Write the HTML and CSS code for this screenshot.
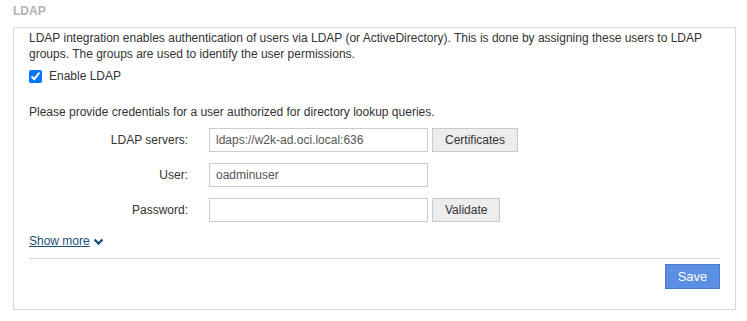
FILE: index.html
```html
<!DOCTYPE html>
<html lang="en">
<head>
    <meta charset="UTF-8" />
    <title>LDAP</title>
    <link rel="stylesheet" href="styles.css">
</head>
<body>
<div class="section">
    <div class="section-title">LDAP</div>
    <div class="panel">
        <p class="intro">LDAP integration enables authentication of users via LDAP (or ActiveDirectory). This is done by assigning these users to LDAP groups. The groups are used to identify the user permissions.</p>
        <label class="check">
            <input type="checkbox" checked />
            <span>Enable LDAP</span>
        </label>
        <p class="hint">Please provide credentials for a user authorized for directory lookup queries.</p>

        <div class="form-row">
            <label class="row-label" for="servers">LDAP servers:</label>
            <input class="field" type="text" id="servers" value="ldaps://w2k-ad.oci.local:636" />
            <button class="btn" type="button">Certificates</button>
        </div>
        <div class="form-row">
            <label class="row-label" for="user">User:</label>
            <input class="field" type="text" id="user" value="oadminuser" />
        </div>
        <div class="form-row">
            <label class="row-label" for="password">Password:</label>
            <input class="field" type="password" id="password" />
            <button class="btn" type="button">Validate</button>
        </div>

        <a class="show-more" href="#">Show more</a><svg class="chevron" width="11" height="8" viewBox="0 0 11 8"><path d="M1.5 1.5 L5.5 5.5 L9.5 1.5" fill="none" stroke="#1b4e78" stroke-width="2.4"/></svg>

        <div class="actions">
            <button class="btn-save" type="button">Save</button>
        </div>
    </div>
</div>
</body>
</html>
```

FILE: styles.css
```css
* {
    box-sizing: border-box;
}

body {
    margin: 0;
    font-family: "Liberation Sans", Arial, sans-serif;
    font-size: 12px;
    color: #333;
    background: #fff;
}

.section {
    padding: 4px 11px 0 13px;
}

.section-title {
    color: #b3b3b3;
    font-size: 12px;
    font-weight: bold;
    line-height: 15px;
    margin-bottom: 8px;
}

.panel {
    border: 1px solid #d9d9d9;
    padding: 2px 15px 20px 15px;
}

.intro {
    margin: 0;
    line-height: 16px;
}

.check {
    display: flex;
    align-items: center;
    height: 16px;
    margin-top: 6px;
}

.check input {
    margin: 0 7px 0 0;
    width: 13px;
    height: 13px;
}

.hint {
    margin: 20px 0 0;
    line-height: 16px;
}

.form-row {
    display: flex;
    align-items: center;
    margin-top: 11px;
}

.form-row:first-of-type {
    margin-top: 8px;
}

.row-label {
    width: 180px;
    padding-right: 21px;
    text-align: right;
    color: #333;
}

.field {
    width: 219px;
    height: 24px;
    border: 1px solid #ccc;
    padding: 0 6px;
    font: inherit;
    color: #555;
    outline: none;
}

.btn {
    height: 24px;
    margin-left: 4px;
    padding: 0 12px;
    border: 1px solid #c9c9c9;
    background: #ededed;
    color: #333;
    font: inherit;
}

.show-more {
    display: inline-block;
    margin-top: 11px;
    color: #1b4e78;
    text-decoration: underline;
    line-height: 16px;
}

.chevron {
    margin-left: 3px;
    vertical-align: -1px;
}

.actions {
    margin-top: 9px;
    border-top: 1px solid #d3d8d3;
    padding-top: 5px;
    display: flex;
    justify-content: flex-end;
}

.btn-save {
    height: 25px;
    width: 55px;
    border: 1px solid #4b78c9;
    background: #5b8fe3;
    color: #fff;
    font: inherit;
    font-size: 13px;
}
```
